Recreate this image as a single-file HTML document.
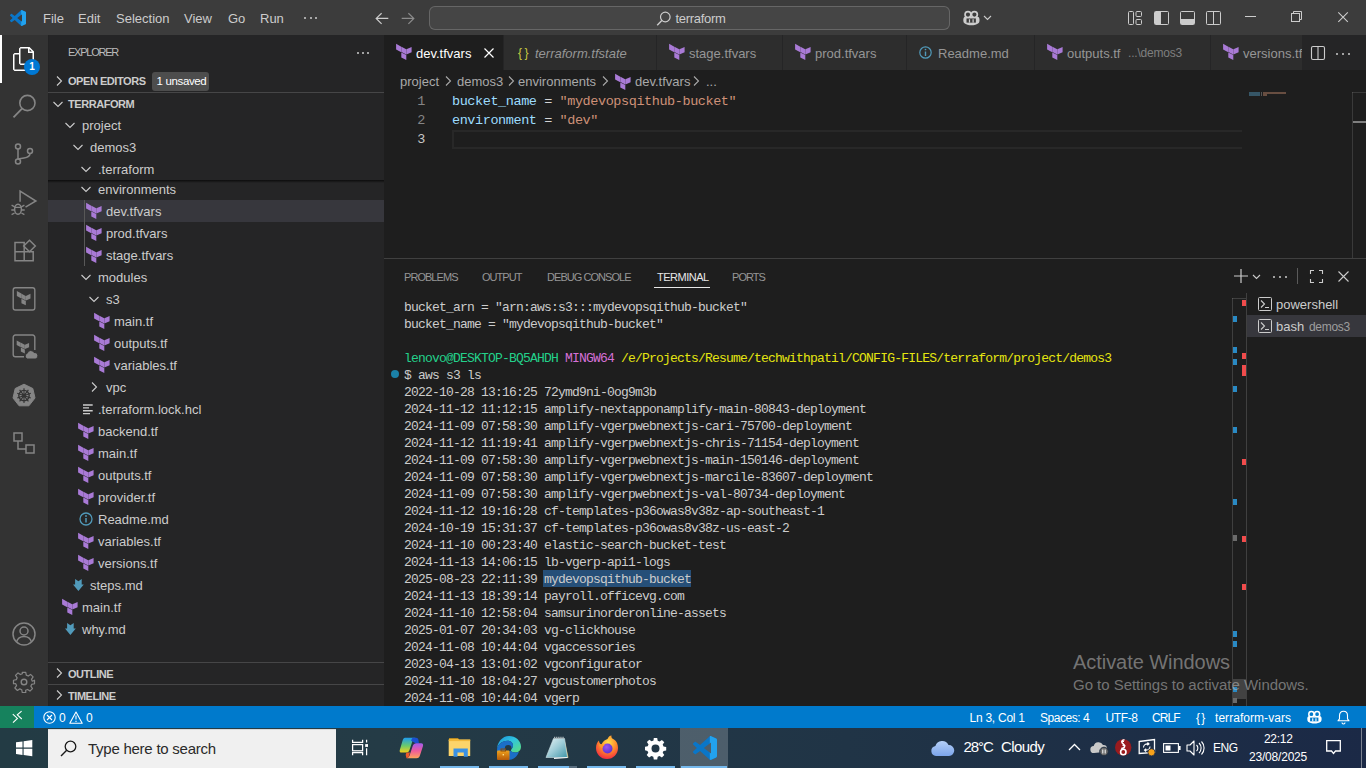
<!DOCTYPE html>
<html><head><meta charset="utf-8"><style>
*{margin:0;padding:0;box-sizing:border-box}
html,body{width:1366px;height:768px;overflow:hidden;background:#1e1e1e;font-family:"Liberation Sans",sans-serif;color:#cccccc}
.a{position:absolute}
.t{position:absolute;white-space:pre;line-height:1}
#title{left:0;top:0;width:1366px;height:35px;background:#3c3c3c}
#act{left:0;top:35px;width:48px;height:671px;background:#333333}
#side{left:48px;top:35px;width:336px;height:671px;background:#252526}
#tabs{left:384px;top:35px;width:982px;height:35px;background:#252526}
#status{left:0;top:706px;width:1366px;height:22px;background:#007acc}
#task{left:0;top:728px;width:1366px;height:40px;background:linear-gradient(90deg,#233b44 0%,#243b46 28%,#203446 62%,#1b2946 100%)}
svg.i{position:absolute;overflow:visible}
.m{font-family:"Liberation Mono",monospace}
</style></head><body>
<div id="title" class="a"></div>
<div id="act" class="a"></div>
<div id="side" class="a"></div>
<div class="a" style="left:48px;top:35px;width:1px;height:671px;background:#232324;"></div>
<div id="tabs" class="a"></div>
<div id="status" class="a"></div>
<div id="task" class="a"></div>
<svg class="i" style="left:10px;top:10px" width="16" height="16" viewBox="0 0 16 16"><defs><clipPath id="vca"><path clip-rule="evenodd" d="M70.9 99.3C72.5 99.9 74.3 99.9 75.9 99.1L96.5 89.2C98.6 88.2 100 86 100 83.6V16.4C100 14 98.6 11.8 96.5 10.8L75.9.9C73.8-.1 71.3.1 69.5 1.4 69.3 1.6 69 1.8 68.8 2.1L29.4 38 12.2 25C10.6 23.8 8.4 23.9 6.9 25.2L1.4 30.3C-.5 31.9-.5 34.8 1.4 36.4L16.2 50 1.4 63.6C-.5 65.2-.5 68.1 1.4 69.7L6.9 74.8C8.4 76.1 10.6 76.2 12.2 75L29.4 62 68.8 97.9C69.4 98.5 70.1 99 70.9 99.3ZM75 27.3 45.1 50 75 72.7Z"/></clipPath></defs><g transform="scale(0.16)"><g clip-path="url(#vca)"><rect x="0" y="0" width="100" height="100" fill="#0a76c8"/><rect x="70" y="0" width="30" height="100" fill="#22a2ee"/></g></g></svg>
<div class="t" style="left:43px;top:11.50px;font-size:13px;height:13px;line-height:13px;color:#cccccc;">File</div>
<div class="t" style="left:78px;top:11.50px;font-size:13px;height:13px;line-height:13px;color:#cccccc;">Edit</div>
<div class="t" style="left:116px;top:11.50px;font-size:13px;height:13px;line-height:13px;color:#cccccc;">Selection</div>
<div class="t" style="left:184px;top:11.50px;font-size:13px;height:13px;line-height:13px;color:#cccccc;">View</div>
<div class="t" style="left:228px;top:11.50px;font-size:13px;height:13px;line-height:13px;color:#cccccc;">Go</div>
<div class="t" style="left:260px;top:11.50px;font-size:13px;height:13px;line-height:13px;color:#cccccc;">Run</div>
<div class="a" style="left:304px;top:17px;width:2px;height:2px;background:#cccccc;border-radius:1px"></div>
<div class="a" style="left:309.5px;top:17px;width:2px;height:2px;background:#cccccc;border-radius:1px"></div>
<div class="a" style="left:315px;top:17px;width:2px;height:2px;background:#cccccc;border-radius:1px"></div>
<svg class="i" style="left:375px;top:12px" width="14" height="13" viewBox="0 0 14 13"><path d="M13.3 6.4H1.2M6.6 1.2 1.2 6.4l5.4 5.4" fill="none" stroke="#cccccc" stroke-width="1.2"/></svg>
<svg class="i" style="left:401px;top:12px" width="14" height="13" viewBox="0 0 14 13"><path d="M.7 6.4h12.1M7.4 1.2l5.4 5.2-5.4 5.4" fill="none" stroke="#8c8c8c" stroke-width="1.2"/></svg>
<div class="a" style="left:429px;top:6px;width:521px;height:24px;background:rgba(255,255,255,0.05);border:1px solid rgba(255,255,255,0.18);border-radius:6px"></div>
<svg class="i" style="left:656px;top:10.5px" width="15" height="15" viewBox="0 0 15 15"><circle cx="9.3" cy="6" r="4.8" fill="none" stroke="#cccccc" stroke-width="1.2"/><path d="M5.8 9.5 1.2 14.2" stroke="#cccccc" stroke-width="1.4"/></svg>
<div class="t" style="left:675.5px;top:12.20px;font-size:13px;height:13px;line-height:13px;color:#cccccc;letter-spacing:-0.3px">terraform</div>
<svg class="i" style="left:962.5px;top:10.5px" width="18" height="16" viewBox="0 0 18 16"><g transform="scale(1.13)"><path d="M1.2 5.2C0 6 0 9.5 1 10.6 2.6 12.2 5 12.6 7.45 12.6S12.3 12.2 13.9 10.6C14.9 9.5 14.9 6 13.7 5.2Z" fill="#cccccc"/><circle cx="4.4" cy="3.2" r="2.6" fill="#3c3c3c" stroke="#cccccc" stroke-width="1.5"/><circle cx="10.1" cy="3.2" r="2.6" fill="#3c3c3c" stroke="#cccccc" stroke-width="1.5"/><rect x="3.1" y="6.6" width="8.3" height="3.7" fill="#3c3c3c"/><rect x="5.2" y="7.3" width="1.1" height="3" fill="#cccccc"/><rect x="8.4" y="7.3" width="1.1" height="3" fill="#cccccc"/></g></svg>
<svg class="i" style="left:983px;top:15px" width="9" height="6" viewBox="0 0 9 6"><path d="M1 1l3.5 3.5L8 1" fill="none" stroke="#cccccc" stroke-width="1.1"/></svg>
<svg class="i" style="left:1128px;top:11px" width="14" height="14" viewBox="0 0 14 14"><rect x="0.5" y="0.5" width="5" height="13" rx="1" fill="none" stroke="#cccccc"/><rect x="8" y="0.5" width="5.5" height="5" rx="1" fill="none" stroke="#cccccc"/><rect x="8" y="8.5" width="5.5" height="5" rx="1" fill="none" stroke="#cccccc"/></svg>
<svg class="i" style="left:1154px;top:11px" width="15" height="14" viewBox="0 0 15 14"><rect x="0.5" y="0.5" width="14" height="13" rx="1" fill="none" stroke="#cccccc"/><rect x="1" y="1" width="6" height="12" fill="#cccccc"/></svg>
<svg class="i" style="left:1180px;top:11px" width="15" height="14" viewBox="0 0 15 14"><rect x="0.5" y="0.5" width="14" height="13" rx="1" fill="none" stroke="#cccccc"/><rect x="1" y="8" width="13" height="5" fill="#cccccc"/></svg>
<svg class="i" style="left:1206px;top:11px" width="15" height="14" viewBox="0 0 15 14"><rect x="0.5" y="0.5" width="14" height="13" rx="1" fill="none" stroke="#cccccc"/><path d="M7.5 1v12" stroke="#cccccc"/></svg>
<div class="a" style="left:1245px;top:16px;width:11px;height:1px;background:#cccccc;"></div>
<svg class="i" style="left:1291px;top:11px" width="12" height="12" viewBox="0 0 12 12"><rect x="0.5" y="2.5" width="8" height="8" fill="none" stroke="#cccccc"/><path d="M2.5 2.5V.5h8v8h-2" fill="none" stroke="#cccccc"/></svg>
<svg class="i" style="left:1338px;top:12px" width="10" height="10" viewBox="0 0 10 10"><path d="M0.3 0.3l9.5 9.5M9.8 0.3l-9.5 9.5" stroke="#cccccc" stroke-width="1.1"/></svg>
<div class="a" style="left:0px;top:35px;width:2px;height:48px;background:#ffffff;"></div>
<svg class="i" style="left:12px;top:47px" width="24" height="24" viewBox="0 0 24 24"><path d="M17.5 0H8.5L7 1.5V6H2.5L1 7.5v15.07L2.5 24h12.07L16 22.57V18h4.7l1.3-1.43V4.5L17.5 0zm0 2.12l2.38 2.38H17.5V2.12zm-3 20.38h-12v-15H7v9.07L8.5 18h6v4.5zm6-6h-12v-15H16V6h4.5v10.5z" fill="#ffffff"/></svg>
<div class="a" style="left:24px;top:59px;width:16px;height:16px;border-radius:8px;background:#0078d4;color:#fff;font-size:10px;line-height:16px;text-align:center;font-weight:bold">1</div>
<svg class="i" style="left:12px;top:93px" width="24" height="24" viewBox="0 0 24 24"><circle cx="15.4" cy="10" r="7.6" fill="none" stroke="#858585" stroke-width="1.6"/><path d="M10 15.6 1.5 24.3" stroke="#858585" stroke-width="1.8"/></svg>
<svg class="i" style="left:12px;top:142px" width="24" height="24" viewBox="0 0 24 24"><circle cx="6" cy="4.5" r="2.5" fill="none" stroke="#858585" stroke-width="1.5"/><circle cx="6" cy="19.5" r="2.5" fill="none" stroke="#858585" stroke-width="1.5"/><circle cx="18" cy="9" r="2.5" fill="none" stroke="#858585" stroke-width="1.5"/><path d="M6 7v10M18 11.5c0 3-3 4-6 4.5-3 .5-6 1-6 1" fill="none" stroke="#858585" stroke-width="1.5"/></svg>
<svg class="i" style="left:8px;top:186px" width="32" height="32" viewBox="0 0 32 32"><path d="M12.1 15.8V5.2L27.9 15 17.5 21.2" fill="none" stroke="#858585" stroke-width="1.5" stroke-linejoin="miter"/><ellipse cx="10" cy="23.3" rx="3.4" ry="5" fill="none" stroke="#858585" stroke-width="1.5"/><path d="M6.7 21.4H13.3M3.6 19.2l3 1.6M16.4 19.2l-3 1.6M3.3 24h3.3M16.7 24h-3.3M3.6 28.6l3-1.6M16.4 28.6l-3-1.6" fill="none" stroke="#858585" stroke-width="1.4"/></svg>
<svg class="i" style="left:8px;top:235px" width="32" height="32" viewBox="0 0 32 32"><path d="M7 7.6H16.2V25.8H7zM7 16.8H25.2V25.8H16.2" fill="none" stroke="#858585" stroke-width="1.5"/><path d="M21.5 5.2 27.3 11 21.5 16.8 15.7 11z" fill="none" stroke="#858585" stroke-width="1.5"/></svg>
<svg class="i" style="left:0px;top:283px" width="48" height="30" viewBox="0 0 48 30"><rect x="13.2" y="4.7" width="21.6" height="22.3" rx="2.2" fill="none" stroke="#858585" stroke-width="1.4"/><g transform="translate(15 5.6) scale(0.88)"><path fill="#858585" d="M2.1 2.8 7.3 5.7V11.3L2.1 8.5ZM7.5 5.8 12.2 8.3V13.6L7.5 11.1ZM12.4 8.3 17.6 5.9V11.3L12.4 13.6ZM7.3 11.6 12.3 14.1V19L7.3 16.6Z"/></g></svg>
<svg class="i" style="left:0px;top:331px" width="48" height="30" viewBox="0 0 48 30"><path d="M24 25.8H15.4A2.2 2.2 0 0 1 13.2 23.6V6.2A2.2 2.2 0 0 1 15.4 4H32.6A2.2 2.2 0 0 1 34.8 6.2V19" fill="none" stroke="#858585" stroke-width="1.4"/><g transform="translate(15 7.2) scale(0.8)"><path fill="#858585" d="M2.1 2.8 7.3 5.7V11.3L2.1 8.5ZM7.5 5.8 12.2 8.3V13.6L7.5 11.1ZM12.4 8.3 17.6 5.9V11.3L12.4 13.6ZM7.3 11.6 12.3 14.1V19L7.3 16.6Z"/></g><path d="M27.5 28A3 3 0 0 1 27.3 22.2 3.6 3.6 0 0 1 34 21.5 3.2 3.2 0 0 1 35.3 28Z" fill="#858585" stroke="#333333" stroke-width="1"/></svg>
<svg class="i" style="left:12px;top:383px" width="24" height="24" viewBox="0 0 24 24"><path d="M12 1.2 20.8 5.5 23 15 16.9 22.8H7.1L1 15 3.2 5.5z" fill="#858585" stroke="#858585" stroke-width="1" stroke-linejoin="round"/><circle cx="12" cy="12.6" r="5.2" fill="none" stroke="#333333" stroke-width="1.4"/><circle cx="12" cy="12.6" r="1.5" fill="#333333"/><path d="M12 5.3v14.6M5.2 10.3l13.6 4.6M5.2 14.9l13.6-4.6M7.6 6.8l8.8 11.6M16.4 6.8 7.6 18.4" stroke="#333333" stroke-width="1.1"/></svg>
<svg class="i" style="left:12px;top:431px" width="24" height="24" viewBox="0 0 24 24"><rect x="2" y="2" width="8" height="8" fill="none" stroke="#858585" stroke-width="1.5"/><rect x="14" y="14" width="8" height="8" fill="none" stroke="#858585" stroke-width="1.5"/><path d="M6 10v8h8" fill="none" stroke="#858585" stroke-width="1.5"/></svg>
<svg class="i" style="left:12px;top:622px" width="24" height="24" viewBox="0 0 24 24"><circle cx="12" cy="12" r="11" fill="none" stroke="#858585" stroke-width="1.5"/><circle cx="12" cy="9" r="4" fill="none" stroke="#858585" stroke-width="1.5"/><path d="M4.5 20c1-3.5 4-5.5 7.5-5.5s6.5 2 7.5 5.5" fill="none" stroke="#858585" stroke-width="1.5"/></svg>
<svg class="i" style="left:12px;top:670px" width="24" height="24" viewBox="0 0 24 24"><path d="M10 1h4l.6 3.2 2.2 1 2.7-1.9 2.9 2.9-1.9 2.7 1 2.2L24 10v4l-3.2.6-1 2.2 1.9 2.7-2.9 2.9-2.7-1.9-2.2 1L14 24h-4l-.6-3.2-2.2-1-2.7 1.9-2.9-2.9 1.9-2.7-1-2.2L0 14v-4l3.2-.6 1-2.2-1.9-2.7 2.9-2.9 2.7 1.9 2.2-1z" fill="none" stroke="#858585" stroke-width="1.4" stroke-linejoin="round" transform="translate(1.5 1.5) scale(0.875)"/><circle cx="12" cy="12" r="2.8" fill="none" stroke="#858585" stroke-width="1.4"/></svg>
<div class="t" style="left:68px;top:47.00px;font-size:11px;height:11px;line-height:11px;color:#bbbbbb;letter-spacing:-1.25px">EXPLORER</div>
<div class="a" style="left:357px;top:52px;width:2px;height:2px;background:#cccccc;border-radius:1px"></div>
<div class="a" style="left:362px;top:52px;width:2px;height:2px;background:#cccccc;border-radius:1px"></div>
<div class="a" style="left:367px;top:52px;width:2px;height:2px;background:#cccccc;border-radius:1px"></div>
<svg class="i" style="left:51px;top:73px" width="16" height="16" viewBox="0 0 16 16"><path d="M6 3.5 10.5 8 6 12.5" fill="none" stroke="#cccccc" stroke-width="1.1"/></svg>
<div class="t" style="left:68px;top:75.50px;font-size:11px;height:11px;line-height:11px;color:#cccccc;font-weight:bold;letter-spacing:-0.45px">OPEN EDITORS</div>
<div class="a" style="left:152px;top:72px;width:57px;height:19px;background:#4d4d4d;border-radius:3px"></div>
<div class="t" style="left:156.5px;top:76.25px;font-size:11.5px;height:11.5px;line-height:11.5px;color:#ffffff;letter-spacing:-0.35px">1 unsaved</div>
<div class="a" style="left:48px;top:92px;width:336px;height:1px;background:rgba(204,204,204,0.2);"></div>
<svg class="i" style="left:50px;top:96px" width="16" height="16" viewBox="0 0 16 16"><path d="M3.5 6 8 10.5 12.5 6" fill="none" stroke="#cccccc" stroke-width="1.1"/></svg>
<div class="t" style="left:68px;top:99.00px;font-size:11px;height:11px;line-height:11px;color:#cccccc;font-weight:bold;letter-spacing:-0.45px">TERRAFORM</div>
<div class="a" style="left:48px;top:200px;width:336px;height:22px;background:#37373d;"></div>
<div class="a" style="left:84px;top:200px;width:1px;height:66px;background:#585858;"></div>
<svg class="i" style="left:78px;top:181px" width="16" height="16" viewBox="0 0 16 16"><path d="M3.5 6 8 10.5 12.5 6" fill="none" stroke="#cccccc" stroke-width="1.1"/></svg>
<div class="t" style="left:98px;top:182.50px;font-size:13px;height:13px;line-height:13px;color:#cccccc;">environments</div>
<svg class="i" style="left:83.9px;top:200.0px" width="20" height="20" viewBox="0 0 20 20"><path fill="#a97ad6" d="M2.1 2.8 7.3 5.7V11.3L2.1 8.5ZM7.5 5.8 12.2 8.3V13.6L7.5 11.1ZM12.4 8.3 17.6 5.9V11.3L12.4 13.6ZM7.3 11.6 12.3 14.1V19L7.3 16.6Z"/></svg>
<div class="t" style="left:106px;top:204.50px;font-size:13px;height:13px;line-height:13px;color:#cccccc;">dev.tfvars</div>
<svg class="i" style="left:83.9px;top:222.0px" width="20" height="20" viewBox="0 0 20 20"><path fill="#a97ad6" d="M2.1 2.8 7.3 5.7V11.3L2.1 8.5ZM7.5 5.8 12.2 8.3V13.6L7.5 11.1ZM12.4 8.3 17.6 5.9V11.3L12.4 13.6ZM7.3 11.6 12.3 14.1V19L7.3 16.6Z"/></svg>
<div class="t" style="left:106px;top:226.50px;font-size:13px;height:13px;line-height:13px;color:#cccccc;">prod.tfvars</div>
<svg class="i" style="left:83.9px;top:244.0px" width="20" height="20" viewBox="0 0 20 20"><path fill="#a97ad6" d="M2.1 2.8 7.3 5.7V11.3L2.1 8.5ZM7.5 5.8 12.2 8.3V13.6L7.5 11.1ZM12.4 8.3 17.6 5.9V11.3L12.4 13.6ZM7.3 11.6 12.3 14.1V19L7.3 16.6Z"/></svg>
<div class="t" style="left:106px;top:248.50px;font-size:13px;height:13px;line-height:13px;color:#cccccc;">stage.tfvars</div>
<svg class="i" style="left:78px;top:269px" width="16" height="16" viewBox="0 0 16 16"><path d="M3.5 6 8 10.5 12.5 6" fill="none" stroke="#cccccc" stroke-width="1.1"/></svg>
<div class="t" style="left:98px;top:270.50px;font-size:13px;height:13px;line-height:13px;color:#cccccc;">modules</div>
<svg class="i" style="left:86px;top:291px" width="16" height="16" viewBox="0 0 16 16"><path d="M3.5 6 8 10.5 12.5 6" fill="none" stroke="#cccccc" stroke-width="1.1"/></svg>
<div class="t" style="left:106px;top:292.50px;font-size:13px;height:13px;line-height:13px;color:#cccccc;">s3</div>
<svg class="i" style="left:91.9px;top:310.0px" width="20" height="20" viewBox="0 0 20 20"><path fill="#a97ad6" d="M2.1 2.8 7.3 5.7V11.3L2.1 8.5ZM7.5 5.8 12.2 8.3V13.6L7.5 11.1ZM12.4 8.3 17.6 5.9V11.3L12.4 13.6ZM7.3 11.6 12.3 14.1V19L7.3 16.6Z"/></svg>
<div class="t" style="left:114px;top:314.50px;font-size:13px;height:13px;line-height:13px;color:#cccccc;">main.tf</div>
<svg class="i" style="left:91.9px;top:332.0px" width="20" height="20" viewBox="0 0 20 20"><path fill="#a97ad6" d="M2.1 2.8 7.3 5.7V11.3L2.1 8.5ZM7.5 5.8 12.2 8.3V13.6L7.5 11.1ZM12.4 8.3 17.6 5.9V11.3L12.4 13.6ZM7.3 11.6 12.3 14.1V19L7.3 16.6Z"/></svg>
<div class="t" style="left:114px;top:336.50px;font-size:13px;height:13px;line-height:13px;color:#cccccc;">outputs.tf</div>
<svg class="i" style="left:91.9px;top:354.0px" width="20" height="20" viewBox="0 0 20 20"><path fill="#a97ad6" d="M2.1 2.8 7.3 5.7V11.3L2.1 8.5ZM7.5 5.8 12.2 8.3V13.6L7.5 11.1ZM12.4 8.3 17.6 5.9V11.3L12.4 13.6ZM7.3 11.6 12.3 14.1V19L7.3 16.6Z"/></svg>
<div class="t" style="left:114px;top:358.50px;font-size:13px;height:13px;line-height:13px;color:#cccccc;">variables.tf</div>
<svg class="i" style="left:86px;top:379px" width="16" height="16" viewBox="0 0 16 16"><path d="M6 3.5 10.5 8 6 12.5" fill="none" stroke="#cccccc" stroke-width="1.1"/></svg>
<div class="t" style="left:106px;top:380.50px;font-size:13px;height:13px;line-height:13px;color:#cccccc;">vpc</div>
<svg class="i" style="left:83.2px;top:403.5px" width="11" height="11" viewBox="0 0 11 11"><path d="M0 1h9.7M0 3.9h6M0 6.8h9.7M0 9.6h7" stroke="#cccccc" stroke-width="1.4"/></svg>
<div class="t" style="left:98px;top:402.50px;font-size:13px;height:13px;line-height:13px;color:#cccccc;">.terraform.lock.hcl</div>
<svg class="i" style="left:75.9px;top:420.0px" width="20" height="20" viewBox="0 0 20 20"><path fill="#a97ad6" d="M2.1 2.8 7.3 5.7V11.3L2.1 8.5ZM7.5 5.8 12.2 8.3V13.6L7.5 11.1ZM12.4 8.3 17.6 5.9V11.3L12.4 13.6ZM7.3 11.6 12.3 14.1V19L7.3 16.6Z"/></svg>
<div class="t" style="left:98px;top:424.50px;font-size:13px;height:13px;line-height:13px;color:#cccccc;">backend.tf</div>
<svg class="i" style="left:75.9px;top:442.0px" width="20" height="20" viewBox="0 0 20 20"><path fill="#a97ad6" d="M2.1 2.8 7.3 5.7V11.3L2.1 8.5ZM7.5 5.8 12.2 8.3V13.6L7.5 11.1ZM12.4 8.3 17.6 5.9V11.3L12.4 13.6ZM7.3 11.6 12.3 14.1V19L7.3 16.6Z"/></svg>
<div class="t" style="left:98px;top:446.50px;font-size:13px;height:13px;line-height:13px;color:#cccccc;">main.tf</div>
<svg class="i" style="left:75.9px;top:464.0px" width="20" height="20" viewBox="0 0 20 20"><path fill="#a97ad6" d="M2.1 2.8 7.3 5.7V11.3L2.1 8.5ZM7.5 5.8 12.2 8.3V13.6L7.5 11.1ZM12.4 8.3 17.6 5.9V11.3L12.4 13.6ZM7.3 11.6 12.3 14.1V19L7.3 16.6Z"/></svg>
<div class="t" style="left:98px;top:468.50px;font-size:13px;height:13px;line-height:13px;color:#cccccc;">outputs.tf</div>
<svg class="i" style="left:75.9px;top:486.0px" width="20" height="20" viewBox="0 0 20 20"><path fill="#a97ad6" d="M2.1 2.8 7.3 5.7V11.3L2.1 8.5ZM7.5 5.8 12.2 8.3V13.6L7.5 11.1ZM12.4 8.3 17.6 5.9V11.3L12.4 13.6ZM7.3 11.6 12.3 14.1V19L7.3 16.6Z"/></svg>
<div class="t" style="left:98px;top:490.50px;font-size:13px;height:13px;line-height:13px;color:#cccccc;">provider.tf</div>
<svg class="i" style="left:79px;top:512px" width="14" height="14" viewBox="0 0 14 14"><circle cx="7" cy="7" r="6" fill="none" stroke="#519aba" stroke-width="1.3"/><path d="M7 6v4.5" stroke="#519aba" stroke-width="1.5"/><circle cx="7" cy="4" r="0.9" fill="#519aba"/></svg>
<div class="t" style="left:98px;top:512.50px;font-size:13px;height:13px;line-height:13px;color:#cccccc;">Readme.md</div>
<svg class="i" style="left:75.9px;top:530.0px" width="20" height="20" viewBox="0 0 20 20"><path fill="#a97ad6" d="M2.1 2.8 7.3 5.7V11.3L2.1 8.5ZM7.5 5.8 12.2 8.3V13.6L7.5 11.1ZM12.4 8.3 17.6 5.9V11.3L12.4 13.6ZM7.3 11.6 12.3 14.1V19L7.3 16.6Z"/></svg>
<div class="t" style="left:98px;top:534.50px;font-size:13px;height:13px;line-height:13px;color:#cccccc;">variables.tf</div>
<svg class="i" style="left:75.9px;top:552.0px" width="20" height="20" viewBox="0 0 20 20"><path fill="#a97ad6" d="M2.1 2.8 7.3 5.7V11.3L2.1 8.5ZM7.5 5.8 12.2 8.3V13.6L7.5 11.1ZM12.4 8.3 17.6 5.9V11.3L12.4 13.6ZM7.3 11.6 12.3 14.1V19L7.3 16.6Z"/></svg>
<div class="t" style="left:98px;top:556.50px;font-size:13px;height:13px;line-height:13px;color:#cccccc;">versions.tf</div>
<svg class="i" style="left:72.5px;top:579px" width="12" height="13" viewBox="0 0 12 13"><path d="M2.1 0 5.4 2.2 8.7 0V5.6H10.8L5.4 12 0 5.6H2.1Z" fill="#519aba"/></svg>
<div class="t" style="left:90px;top:578.50px;font-size:13px;height:13px;line-height:13px;color:#cccccc;">steps.md</div>
<svg class="i" style="left:59.9px;top:596.0px" width="20" height="20" viewBox="0 0 20 20"><path fill="#a97ad6" d="M2.1 2.8 7.3 5.7V11.3L2.1 8.5ZM7.5 5.8 12.2 8.3V13.6L7.5 11.1ZM12.4 8.3 17.6 5.9V11.3L12.4 13.6ZM7.3 11.6 12.3 14.1V19L7.3 16.6Z"/></svg>
<div class="t" style="left:82px;top:600.50px;font-size:13px;height:13px;line-height:13px;color:#cccccc;">main.tf</div>
<svg class="i" style="left:64.5px;top:623px" width="12" height="13" viewBox="0 0 12 13"><path d="M2.1 0 5.4 2.2 8.7 0V5.6H10.8L5.4 12 0 5.6H2.1Z" fill="#519aba"/></svg>
<div class="t" style="left:82px;top:622.50px;font-size:13px;height:13px;line-height:13px;color:#cccccc;">why.md</div>
<div class="a" style="left:48px;top:114px;width:336px;height:66px;background:#252526;"></div>
<div class="a" style="left:48px;top:180px;width:336px;height:3px;background:linear-gradient(#000000aa,#00000000)"></div>
<svg class="i" style="left:62px;top:117px" width="16" height="16" viewBox="0 0 16 16"><path d="M3.5 6 8 10.5 12.5 6" fill="none" stroke="#cccccc" stroke-width="1.1"/></svg>
<div class="t" style="left:82px;top:118.50px;font-size:13px;height:13px;line-height:13px;color:#cccccc;">project</div>
<svg class="i" style="left:70px;top:139px" width="16" height="16" viewBox="0 0 16 16"><path d="M3.5 6 8 10.5 12.5 6" fill="none" stroke="#cccccc" stroke-width="1.1"/></svg>
<div class="t" style="left:90px;top:140.50px;font-size:13px;height:13px;line-height:13px;color:#cccccc;">demos3</div>
<svg class="i" style="left:78px;top:161px" width="16" height="16" viewBox="0 0 16 16"><path d="M3.5 6 8 10.5 12.5 6" fill="none" stroke="#cccccc" stroke-width="1.1"/></svg>
<div class="t" style="left:98px;top:162.50px;font-size:13px;height:13px;line-height:13px;color:#cccccc;">.terraform</div>
<div class="a" style="left:48px;top:662px;width:336px;height:1px;background:rgba(204,204,204,0.2);"></div>
<svg class="i" style="left:51px;top:665px" width="16" height="16" viewBox="0 0 16 16"><path d="M6 3.5 10.5 8 6 12.5" fill="none" stroke="#cccccc" stroke-width="1.1"/></svg>
<div class="t" style="left:68px;top:669.00px;font-size:11px;height:11px;line-height:11px;color:#cccccc;font-weight:bold;letter-spacing:-0.45px">OUTLINE</div>
<div class="a" style="left:48px;top:684px;width:336px;height:1px;background:rgba(204,204,204,0.2);"></div>
<svg class="i" style="left:51px;top:687px" width="16" height="16" viewBox="0 0 16 16"><path d="M6 3.5 10.5 8 6 12.5" fill="none" stroke="#cccccc" stroke-width="1.1"/></svg>
<div class="t" style="left:68px;top:691.00px;font-size:11px;height:11px;line-height:11px;color:#cccccc;font-weight:bold;letter-spacing:-0.45px">TIMELINE</div>
<div class="a" style="left:384px;top:35px;width:119px;height:35px;background:#1e1e1e;"></div>
<svg class="i" style="left:393.9px;top:41.2px" width="20" height="20" viewBox="0 0 20 20"><path fill="#a97ad6" d="M2.1 2.8 7.3 5.7V11.3L2.1 8.5ZM7.5 5.8 12.2 8.3V13.6L7.5 11.1ZM12.4 8.3 17.6 5.9V11.3L12.4 13.6ZM7.3 11.6 12.3 14.1V19L7.3 16.6Z"/></svg>
<div class="t" style="left:416px;top:46.50px;font-size:13px;height:13px;line-height:13px;color:#ffffff;">dev.tfvars</div>
<div class="a" style="left:504px;top:35px;width:152px;height:35px;background:#2d2d2d;"></div>
<div class="t" style="left:518px;top:46.50px;font-size:12px;height:12px;line-height:12px;color:#cbcb41;letter-spacing:2.5px">{}</div>
<div class="t" style="left:535px;top:46.50px;font-size:13px;height:13px;line-height:13px;color:#969696;font-style:italic">terraform.tfstate</div>
<div class="a" style="left:657px;top:35px;width:125px;height:35px;background:#2d2d2d;"></div>
<svg class="i" style="left:666.9px;top:41.2px" width="20" height="20" viewBox="0 0 20 20"><path fill="#a97ad6" d="M2.1 2.8 7.3 5.7V11.3L2.1 8.5ZM7.5 5.8 12.2 8.3V13.6L7.5 11.1ZM12.4 8.3 17.6 5.9V11.3L12.4 13.6ZM7.3 11.6 12.3 14.1V19L7.3 16.6Z"/></svg>
<div class="t" style="left:689px;top:46.50px;font-size:13px;height:13px;line-height:13px;color:#969696;">stage.tfvars</div>
<div class="a" style="left:783px;top:35px;width:123px;height:35px;background:#2d2d2d;"></div>
<svg class="i" style="left:792.9px;top:41.2px" width="20" height="20" viewBox="0 0 20 20"><path fill="#a97ad6" d="M2.1 2.8 7.3 5.7V11.3L2.1 8.5ZM7.5 5.8 12.2 8.3V13.6L7.5 11.1ZM12.4 8.3 17.6 5.9V11.3L12.4 13.6ZM7.3 11.6 12.3 14.1V19L7.3 16.6Z"/></svg>
<div class="t" style="left:815px;top:46.50px;font-size:13px;height:13px;line-height:13px;color:#969696;">prod.tfvars</div>
<div class="a" style="left:907px;top:35px;width:127px;height:35px;background:#2d2d2d;"></div>
<svg class="i" style="left:919px;top:46px" width="13" height="13" viewBox="0 0 13 13"><circle cx="6.5" cy="6.5" r="5.7" fill="none" stroke="#519aba" stroke-width="1.2"/><path d="M6.5 5.5v4.5" stroke="#519aba" stroke-width="1.4"/><circle cx="6.5" cy="3.5" r="0.85" fill="#519aba"/></svg>
<div class="t" style="left:938px;top:46.50px;font-size:13px;height:13px;line-height:13px;color:#969696;">Readme.md</div>
<div class="a" style="left:1035px;top:35px;width:175px;height:35px;background:#2d2d2d;"></div>
<svg class="i" style="left:1044.9px;top:41.2px" width="20" height="20" viewBox="0 0 20 20"><path fill="#a97ad6" d="M2.1 2.8 7.3 5.7V11.3L2.1 8.5ZM7.5 5.8 12.2 8.3V13.6L7.5 11.1ZM12.4 8.3 17.6 5.9V11.3L12.4 13.6ZM7.3 11.6 12.3 14.1V19L7.3 16.6Z"/></svg>
<div class="t" style="left:1067px;top:46.50px;font-size:13px;height:13px;line-height:13px;color:#969696;">outputs.tf</div>
<div class="a" style="left:1211px;top:35px;width:91px;height:35px;background:#2d2d2d;"></div>
<svg class="i" style="left:1220.9px;top:41.2px" width="20" height="20" viewBox="0 0 20 20"><path fill="#a97ad6" d="M2.1 2.8 7.3 5.7V11.3L2.1 8.5ZM7.5 5.8 12.2 8.3V13.6L7.5 11.1ZM12.4 8.3 17.6 5.9V11.3L12.4 13.6ZM7.3 11.6 12.3 14.1V19L7.3 16.6Z"/></svg>
<div class="t" style="left:1243px;top:46.50px;font-size:13px;height:13px;line-height:13px;color:#969696;">versions.tf</div>
<div class="a" style="left:1302px;top:35px;width:64px;height:35px;background:#252526;"></div>
<div class="t" style="left:1128px;top:47.00px;font-size:12px;height:12px;line-height:12px;color:#7f7f7f;letter-spacing:-0.2px">...\demos3</div>
<svg class="i" style="left:484px;top:48px" width="10" height="10" viewBox="0 0 10 10"><path d="M0.5 0.5l9 9M9.5 0.5l-9 9" stroke="#ffffff" stroke-width="1.2"/></svg>
<svg class="i" style="left:1311px;top:46px" width="14" height="14" viewBox="0 0 14 14"><rect x="0.5" y="0.5" width="13" height="13" rx="1.5" fill="none" stroke="#cccccc" stroke-width="1.1"/><path d="M7 1v12" stroke="#cccccc" stroke-width="1.1"/></svg>
<div class="a" style="left:1336px;top:53px;width:2px;height:2px;background:#cccccc;border-radius:1px"></div>
<div class="a" style="left:1342px;top:53px;width:2px;height:2px;background:#cccccc;border-radius:1px"></div>
<div class="a" style="left:1348px;top:53px;width:2px;height:2px;background:#cccccc;border-radius:1px"></div>
<div class="t" style="left:400px;top:74.50px;font-size:13px;height:13px;line-height:13px;color:#a9a9a9;">project</div>
<svg class="i" style="left:440px;top:73px" width="16" height="16" viewBox="0 0 16 16"><path d="M6 3.5 10.5 8 6 12.5" fill="none" stroke="#a9a9a9" stroke-width="1.1"/></svg>
<div class="t" style="left:457px;top:74.50px;font-size:13px;height:13px;line-height:13px;color:#a9a9a9;">demos3</div>
<svg class="i" style="left:503px;top:73px" width="16" height="16" viewBox="0 0 16 16"><path d="M6 3.5 10.5 8 6 12.5" fill="none" stroke="#a9a9a9" stroke-width="1.1"/></svg>
<div class="t" style="left:518px;top:74.50px;font-size:13px;height:13px;line-height:13px;color:#a9a9a9;">environments</div>
<svg class="i" style="left:596.5px;top:73px" width="16" height="16" viewBox="0 0 16 16"><path d="M6 3.5 10.5 8 6 12.5" fill="none" stroke="#a9a9a9" stroke-width="1.1"/></svg>
<svg class="i" style="left:612.9px;top:71.2px" width="20" height="20" viewBox="0 0 20 20"><path fill="#a97ad6" d="M2.1 2.8 7.3 5.7V11.3L2.1 8.5ZM7.5 5.8 12.2 8.3V13.6L7.5 11.1ZM12.4 8.3 17.6 5.9V11.3L12.4 13.6ZM7.3 11.6 12.3 14.1V19L7.3 16.6Z"/></svg>
<div class="t" style="left:635px;top:74.50px;font-size:13px;height:13px;line-height:13px;color:#a9a9a9;">dev.tfvars</div>
<svg class="i" style="left:688px;top:73px" width="16" height="16" viewBox="0 0 16 16"><path d="M6 3.5 10.5 8 6 12.5" fill="none" stroke="#a9a9a9" stroke-width="1.1"/></svg>
<div class="t" style="left:706px;top:74.50px;font-size:13px;height:13px;line-height:13px;color:#a9a9a9;">...</div>
<div class="t" style="left:0px;width:425px;text-align:right;top:95.3px;font-size:13.5px;line-height:14px;color:#858585;font-family:'Liberation Mono',monospace;letter-spacing:-0.42px">1</div>
<div class="t" style="left:0px;width:425px;text-align:right;top:114.3px;font-size:13.5px;line-height:14px;color:#858585;font-family:'Liberation Mono',monospace;letter-spacing:-0.42px">2</div>
<div class="t" style="left:0px;width:425px;text-align:right;top:133.3px;font-size:13.5px;line-height:14px;color:#c6c6c6;font-family:'Liberation Mono',monospace;letter-spacing:-0.42px">3</div>
<div class="t" style="left:452px;top:95.3px;font-size:13.5px;line-height:14px;font-family:'Liberation Mono',monospace;letter-spacing:-0.42px"><span style="color:#9cdcfe">bucket_name</span> <span style="color:#d4d4d4">=</span> <span style="color:#ce9178">"mydevopsqithub-bucket"</span></div>
<div class="t" style="left:452px;top:114.3px;font-size:13.5px;line-height:14px;font-family:'Liberation Mono',monospace;letter-spacing:-0.42px"><span style="color:#9cdcfe">environment</span> <span style="color:#d4d4d4">=</span> <span style="color:#ce9178">"dev"</span></div>
<div class="a" style="left:452px;top:130px;width:790px;height:19px;border:2px solid #282828;border-right:none"></div>
<div class="a" style="left:1249px;top:92px;width:11px;height:4px;background:#3f6a80;opacity:.75"></div>
<div class="a" style="left:1261px;top:92px;width:1px;height:4px;background:#555555;"></div>
<div class="a" style="left:1263px;top:92px;width:23px;height:1.5px;background:#7a5a4a;opacity:.8"></div>
<div class="a" style="left:1263px;top:94px;width:4px;height:1.5px;background:#7a5a4a;opacity:.8"></div>
<div class="a" style="left:1352px;top:92px;width:1px;height:166px;background:rgba(127,127,127,0.3);"></div>
<div class="a" style="left:1352px;top:92px;width:14px;height:1px;background:rgba(127,127,127,0.3);"></div>
<div class="a" style="left:1353px;top:121px;width:13px;height:2px;background:#a0a0a0;opacity:.75"></div>
<div class="a" style="left:384px;top:258px;width:982px;height:1px;background:rgba(128,128,128,0.35);"></div>
<div class="t" style="left:404px;top:271.50px;font-size:11px;height:11px;line-height:11px;color:#969696;letter-spacing:-0.95px">PROBLEMS</div>
<div class="t" style="left:482px;top:271.50px;font-size:11px;height:11px;line-height:11px;color:#969696;letter-spacing:-0.95px">OUTPUT</div>
<div class="t" style="left:547px;top:271.50px;font-size:11px;height:11px;line-height:11px;color:#969696;letter-spacing:-0.95px">DEBUG CONSOLE</div>
<div class="t" style="left:657px;top:271.50px;font-size:11px;height:11px;line-height:11px;color:#e7e7e7;letter-spacing:-0.5px">TERMINAL</div>
<div class="t" style="left:732px;top:271.50px;font-size:11px;height:11px;line-height:11px;color:#969696;letter-spacing:-0.95px">PORTS</div>
<div class="a" style="left:654px;top:287px;width:56px;height:1px;background:#e7e7e7;"></div>
<svg class="i" style="left:1234px;top:269px" width="14" height="14" viewBox="0 0 14 14"><path d="M7 0v14M0 7h14" stroke="#cccccc" stroke-width="1.2"/></svg>
<svg class="i" style="left:1252px;top:274px" width="9" height="6" viewBox="0 0 9 6"><path d="M1 1l3.5 3.5L8 1" fill="none" stroke="#cccccc" stroke-width="1.1"/></svg>
<div class="a" style="left:1273px;top:276px;width:2px;height:2px;background:#cccccc;border-radius:1px"></div>
<div class="a" style="left:1279px;top:276px;width:2px;height:2px;background:#cccccc;border-radius:1px"></div>
<div class="a" style="left:1285px;top:276px;width:2px;height:2px;background:#cccccc;border-radius:1px"></div>
<div class="a" style="left:1297px;top:268px;width:1px;height:16px;background:#5a5a5a;"></div>
<svg class="i" style="left:1310px;top:270px" width="13" height="13" viewBox="0 0 13 13"><path d="M0.5 4V0.5H4M9 0.5h3.5V4M12.5 9v3.5H9M4 12.5H0.5V9" fill="none" stroke="#cccccc" stroke-width="1.1"/></svg>
<svg class="i" style="left:1338px;top:271px" width="11" height="11" viewBox="0 0 11 11"><path d="M0.5 0.5l10 10M10.5 0.5l-10 10" stroke="#cccccc" stroke-width="1.1"/></svg>
<div class="a" style="left:543px;top:570px;width:148px;height:17px;background:#264f78;"></div>
<div class="t" style="left:404px;top:300.8px;font-size:13px;line-height:14px;color:#cccccc;font-family:'Liberation Mono',monospace;letter-spacing:-0.8px">bucket_arn = "arn:aws:s3:::mydevopsqithub-bucket"</div>
<div class="t" style="left:404px;top:317.8px;font-size:13px;line-height:14px;color:#cccccc;font-family:'Liberation Mono',monospace;letter-spacing:-0.8px">bucket_name = "mydevopsqithub-bucket"</div>
<div class="t" style="left:404px;top:351.8px;font-size:13px;line-height:14px;color:#cccccc;font-family:'Liberation Mono',monospace;letter-spacing:-0.8px"><span style="color:#23d18b">lenovo@DESKTOP-BQ5AHDH</span> <span style="color:#d670d6">MINGW64</span> <span style="color:#e5e510">/e/Projects/Resume/techwithpatil/CONFIG-FILES/terraform/project/demos3</span></div>
<div class="t" style="left:404px;top:368.8px;font-size:13px;line-height:14px;color:#cccccc;font-family:'Liberation Mono',monospace;letter-spacing:-0.8px">$ aws s3 ls</div>
<div class="t" style="left:404px;top:385.8px;font-size:13px;line-height:14px;color:#cccccc;font-family:'Liberation Mono',monospace;letter-spacing:-0.8px">2022-10-28 13:16:25 72ymd9ni-0og9m3b</div>
<div class="t" style="left:404px;top:402.8px;font-size:13px;line-height:14px;color:#cccccc;font-family:'Liberation Mono',monospace;letter-spacing:-0.8px">2024-11-12 11:12:15 amplify-nextapponamplify-main-80843-deployment</div>
<div class="t" style="left:404px;top:419.8px;font-size:13px;line-height:14px;color:#cccccc;font-family:'Liberation Mono',monospace;letter-spacing:-0.8px">2024-11-09 07:58:30 amplify-vgerpwebnextjs-cari-75700-deployment</div>
<div class="t" style="left:404px;top:436.8px;font-size:13px;line-height:14px;color:#cccccc;font-family:'Liberation Mono',monospace;letter-spacing:-0.8px">2024-11-12 11:19:41 amplify-vgerpwebnextjs-chris-71154-deployment</div>
<div class="t" style="left:404px;top:453.8px;font-size:13px;line-height:14px;color:#cccccc;font-family:'Liberation Mono',monospace;letter-spacing:-0.8px">2024-11-09 07:58:30 amplify-vgerpwebnextjs-main-150146-deployment</div>
<div class="t" style="left:404px;top:470.8px;font-size:13px;line-height:14px;color:#cccccc;font-family:'Liberation Mono',monospace;letter-spacing:-0.8px">2024-11-09 07:58:30 amplify-vgerpwebnextjs-marcile-83607-deployment</div>
<div class="t" style="left:404px;top:487.8px;font-size:13px;line-height:14px;color:#cccccc;font-family:'Liberation Mono',monospace;letter-spacing:-0.8px">2024-11-09 07:58:30 amplify-vgerpwebnextjs-val-80734-deployment</div>
<div class="t" style="left:404px;top:504.8px;font-size:13px;line-height:14px;color:#cccccc;font-family:'Liberation Mono',monospace;letter-spacing:-0.8px">2024-11-12 19:16:28 cf-templates-p36owas8v38z-ap-southeast-1</div>
<div class="t" style="left:404px;top:521.8px;font-size:13px;line-height:14px;color:#cccccc;font-family:'Liberation Mono',monospace;letter-spacing:-0.8px">2024-10-19 15:31:37 cf-templates-p36owas8v38z-us-east-2</div>
<div class="t" style="left:404px;top:538.8px;font-size:13px;line-height:14px;color:#cccccc;font-family:'Liberation Mono',monospace;letter-spacing:-0.8px">2024-11-10 00:23:40 elastic-search-bucket-test</div>
<div class="t" style="left:404px;top:555.8px;font-size:13px;line-height:14px;color:#cccccc;font-family:'Liberation Mono',monospace;letter-spacing:-0.8px">2024-11-13 14:06:15 lb-vgerp-api1-logs</div>
<div class="t" style="left:404px;top:572.8px;font-size:13px;line-height:14px;color:#cccccc;font-family:'Liberation Mono',monospace;letter-spacing:-0.8px">2025-08-23 22:11:39 mydevopsqithub-bucket</div>
<div class="t" style="left:404px;top:589.8px;font-size:13px;line-height:14px;color:#cccccc;font-family:'Liberation Mono',monospace;letter-spacing:-0.8px">2024-11-13 18:39:14 payroll.officevg.com</div>
<div class="t" style="left:404px;top:606.8px;font-size:13px;line-height:14px;color:#cccccc;font-family:'Liberation Mono',monospace;letter-spacing:-0.8px">2024-11-10 12:58:04 samsurinorderonline-assets</div>
<div class="t" style="left:404px;top:623.8px;font-size:13px;line-height:14px;color:#cccccc;font-family:'Liberation Mono',monospace;letter-spacing:-0.8px">2025-01-07 20:34:03 vg-clickhouse</div>
<div class="t" style="left:404px;top:640.8px;font-size:13px;line-height:14px;color:#cccccc;font-family:'Liberation Mono',monospace;letter-spacing:-0.8px">2024-11-08 10:44:04 vgaccessories</div>
<div class="t" style="left:404px;top:657.8px;font-size:13px;line-height:14px;color:#cccccc;font-family:'Liberation Mono',monospace;letter-spacing:-0.8px">2023-04-13 13:01:02 vgconfigurator</div>
<div class="t" style="left:404px;top:674.8px;font-size:13px;line-height:14px;color:#cccccc;font-family:'Liberation Mono',monospace;letter-spacing:-0.8px">2024-11-10 18:04:27 vgcustomerphotos</div>
<div class="t" style="left:404px;top:691.8px;font-size:13px;line-height:14px;color:#cccccc;font-family:'Liberation Mono',monospace;letter-spacing:-0.8px">2024-11-08 10:44:04 vgerp</div>
<div class="a" style="left:391px;top:370px;width:8px;height:8px;border-radius:4px;background:#1b81a8"></div>
<div class="a" style="left:1232px;top:298px;width:1px;height:408px;background:rgba(127,127,127,0.35);"></div>
<div class="a" style="left:1232px;top:298px;width:14px;height:1px;background:rgba(127,127,127,0.35);"></div>
<div class="a" style="left:1246px;top:293px;width:1px;height:413px;background:rgba(128,128,128,0.35);"></div>
<div class="a" style="left:1233px;top:316px;width:4px;height:6px;background:#2a8ac4;"></div>
<div class="a" style="left:1233px;top:347px;width:4px;height:6px;background:#2a8ac4;"></div>
<div class="a" style="left:1233px;top:359px;width:4px;height:6px;background:#2a8ac4;"></div>
<div class="a" style="left:1233px;top:386px;width:4px;height:6px;background:#2a8ac4;"></div>
<div class="a" style="left:1233px;top:427px;width:4px;height:6px;background:#2a8ac4;"></div>
<div class="a" style="left:1233px;top:499px;width:4px;height:6px;background:#2a8ac4;"></div>
<div class="a" style="left:1233px;top:631px;width:4px;height:6px;background:#2a8ac4;"></div>
<div class="a" style="left:1233px;top:641px;width:4px;height:6px;background:#2a8ac4;"></div>
<div class="a" style="left:1242px;top:300px;width:4px;height:6px;background:#f14c4c;"></div>
<div class="a" style="left:1242px;top:353px;width:4px;height:6px;background:#f14c4c;"></div>
<div class="a" style="left:1242px;top:459px;width:4px;height:6px;background:#f14c4c;"></div>
<div class="a" style="left:1242px;top:536px;width:4px;height:6px;background:#f14c4c;"></div>
<div class="a" style="left:1242px;top:584px;width:4px;height:6px;background:#f14c4c;"></div>
<div class="a" style="left:1242px;top:365px;width:4px;height:11px;background:#f14c4c;"></div>
<div class="a" style="left:1233px;top:535px;width:4px;height:6px;background:#6b6b6b;"></div>
<div class="a" style="left:1233px;top:679px;width:13px;height:20px;background:rgba(121,121,121,0.4);"></div>
<div class="a" style="left:1233px;top:687px;width:4px;height:5px;background:#2a8ac4;"></div>
<div class="a" style="left:1233px;top:698px;width:4px;height:5px;background:#6b6b6b;"></div>
<div class="a" style="left:1247px;top:315px;width:119px;height:22px;background:#37373d;"></div>
<svg class="i" style="left:1258px;top:297px" width="14" height="14" viewBox="0 0 14 14"><rect x="0.5" y="0.5" width="13" height="13" rx="1" fill="none" stroke="#cccccc" stroke-width="1"/><path d="M3 3.5 6.5 7 3 10.5M7 10.5h4" fill="none" stroke="#cccccc" stroke-width="1.1"/></svg>
<div class="t" style="left:1276px;top:297.50px;font-size:13px;height:13px;line-height:13px;color:#cccccc;">powershell</div>
<svg class="i" style="left:1258px;top:319px" width="14" height="14" viewBox="0 0 14 14"><rect x="0.5" y="0.5" width="13" height="13" rx="1" fill="none" stroke="#cccccc" stroke-width="1"/><path d="M3 3.5 6.5 7 3 10.5M7 10.5h4" fill="none" stroke="#cccccc" stroke-width="1.1"/></svg>
<div class="t" style="left:1276px;top:319.50px;font-size:13px;height:13px;line-height:13px;color:#cccccc;">bash</div>
<div class="t" style="left:1309px;top:320.50px;font-size:12px;height:12px;line-height:12px;color:#9d9d9d;letter-spacing:-0.3px">demos3</div>
<div class="t" style="left:1073px;top:652.00px;font-size:20px;height:20px;line-height:20px;color:rgba(190,190,190,0.55);letter-spacing:-0.05px">Activate Windows</div>
<div class="t" style="left:1073px;top:677.00px;font-size:15px;height:15px;line-height:15px;color:rgba(190,190,190,0.55);letter-spacing:-0.03px">Go to Settings to activate Windows.</div>
<div class="a" style="left:0px;top:706px;width:34px;height:22px;background:#16825d;"></div>
<svg class="i" style="left:0px;top:704px" width="34" height="22" viewBox="0 0 34 22"><path d="M12.8 10.2 17.4 14.4 13 18.7M21.6 7.2 17.3 10.8 21.8 15" fill="none" stroke="#ffffff" stroke-width="1.1"/></svg>
<svg class="i" style="left:43px;top:711px" width="13" height="13" viewBox="0 0 13 13"><circle cx="6.5" cy="6.5" r="5.7" fill="none" stroke="#ffffff" stroke-width="1.1"/><path d="M4 4l5 5M9 4 4 9" stroke="#ffffff" stroke-width="1.1"/></svg>
<div class="t" style="left:59px;top:712.00px;font-size:12px;height:12px;line-height:12px;color:#ffffff;">0</div>
<svg class="i" style="left:69px;top:711px" width="14" height="13" viewBox="0 0 14 13"><path d="M7 1 13.2 12.2H.8z" fill="none" stroke="#ffffff" stroke-width="1.1" stroke-linejoin="round"/><path d="M7 4.5v4M7 9.7v1.3" stroke="#ffffff" stroke-width="1.1"/></svg>
<div class="t" style="left:86px;top:712.00px;font-size:12px;height:12px;line-height:12px;color:#ffffff;">0</div>
<div class="t" style="left:969.5px;top:712.00px;font-size:12px;height:12px;line-height:12px;color:#ffffff;letter-spacing:-0.25px">Ln 3, Col 1</div>
<div class="t" style="left:1040px;top:712.00px;font-size:12px;height:12px;line-height:12px;color:#ffffff;letter-spacing:-0.45px">Spaces: 4</div>
<div class="t" style="left:1105.5px;top:712.00px;font-size:12px;height:12px;line-height:12px;color:#ffffff;letter-spacing:-0.4px">UTF-8</div>
<div class="t" style="left:1152px;top:712.00px;font-size:12px;height:12px;line-height:12px;color:#ffffff;letter-spacing:-0.9px">CRLF</div>
<div class="t" style="left:1215px;top:712.00px;font-size:12px;height:12px;line-height:12px;color:#ffffff;letter-spacing:0.05px">terraform-vars</div>
<div class="t" style="left:1196px;top:711.50px;font-size:12px;height:12px;line-height:12px;color:#ffffff;letter-spacing:-1px">{ }</div>
<svg class="i" style="left:1306.9px;top:710.6px" width="18" height="16" viewBox="0 0 18 16"><g transform="scale(1.0)"><path d="M1.2 5.2C0 6 0 9.5 1 10.6 2.6 12.2 5 12.6 7.45 12.6S12.3 12.2 13.9 10.6C14.9 9.5 14.9 6 13.7 5.2Z" fill="#ffffff"/><circle cx="4.4" cy="3.2" r="2.6" fill="#007acc" stroke="#ffffff" stroke-width="1.5"/><circle cx="10.1" cy="3.2" r="2.6" fill="#007acc" stroke="#ffffff" stroke-width="1.5"/><rect x="3.1" y="6.6" width="8.3" height="3.7" fill="#007acc"/><rect x="5.2" y="7.3" width="1.1" height="3" fill="#ffffff"/><rect x="8.4" y="7.3" width="1.1" height="3" fill="#ffffff"/></g></svg>
<svg class="i" style="left:1337px;top:710px" width="13" height="14" viewBox="0 0 13 14"><path d="M6.5 1.2c2.4 0 4 1.8 4 4.3v3.3l1.5 2H1l1.5-2V5.5c0-2.5 1.6-4.3 4-4.3z" fill="none" stroke="#ffffff" stroke-width="1.1" stroke-linejoin="round"/><path d="M5 12.5a1.5 1.5 0 0 0 3 0" fill="none" stroke="#ffffff" stroke-width="1.1"/></svg>
<svg class="i" style="left:15.8px;top:739.8px" width="16.3" height="16.3" viewBox="0 0 16.3 16.3"><path fill="#ffffff" d="M0 2.3 6.5 1.4V7.6H0ZM7.6 1.2 16.3 0V7.6H7.6ZM0 8.7H6.5V14.9L0 14ZM7.6 8.7H16.3V16.3L7.6 15.1Z"/></svg>
<div class="a" style="left:48px;top:729px;width:288px;height:39px;background:#f0f0f0;border-top:1px solid #d9d9d9"></div>
<svg class="i" style="left:60px;top:740px" width="17" height="17" viewBox="0 0 17 17"><circle cx="10.5" cy="6.5" r="5.3" fill="none" stroke="#1a1a1a" stroke-width="1.3"/><path d="M6.7 10.3 1 16" stroke="#1a1a1a" stroke-width="1.4"/></svg>
<div class="t" style="left:88px;top:740.80px;font-size:15px;height:15px;line-height:15px;color:#2a2a2a;letter-spacing:-0.25px">Type here to search</div>
<svg class="i" style="left:346px;top:734px" width="30" height="28" viewBox="0 0 30 28"><path d="M6.6 5.8V8.3H16.6V5.8M6.6 21.2V18.7H16.6V21.2M20.6 5.8V8.6M20.6 14.2V21.2" fill="none" stroke="#ffffff" stroke-width="1.25"/><rect x="6.6" y="10.6" width="10" height="6.2" fill="none" stroke="#ffffff" stroke-width="1.25"/><rect x="19.2" y="10.1" width="2.8" height="2.8" fill="#ffffff"/></svg>
<svg class="i" style="left:398px;top:736px" width="26" height="24" viewBox="0 0 26 24"><defs><linearGradient id="cpl" x1="0" y1="0" x2="0" y2="1"><stop offset="0" stop-color="#1d9cf0"/><stop offset=".55" stop-color="#6ccb6a"/><stop offset="1" stop-color="#f6d21a"/></linearGradient><linearGradient id="cpr" x1="0" y1="0" x2="0" y2="1"><stop offset="0" stop-color="#a05cf0"/><stop offset=".5" stop-color="#ef5a9c"/><stop offset="1" stop-color="#ffa45a"/></linearGradient></defs><path d="M7 1.7H17.5C16 2.3 14.8 3.8 14.3 5.5L11.3 14.5C10.7 16.2 9.2 16.6 7.5 16.6H3.6C2 16.6 1.3 15.4 1.8 13.9L4.6 4.6C5.1 2.9 5.9 1.7 7 1.7Z" fill="url(#cpl)"/><path d="M13 4.5 14.5 1.7H18C19.5 1.7 20 2.5 20.3 3.5L21 7.2H17.5Z" fill="#1a4fd0"/><path d="M20.5 7.2H23.2C24.8 7.2 25.4 8.5 25 10L22 19.3C21.5 21 20.5 22.3 18.5 22.3H8.5C10.2 21.8 11.3 20.5 11.8 18.8L14.8 9.8C15.4 8.2 16.5 7.2 18.5 7.2Z" fill="url(#cpr)"/><path d="M8.5 22.3 7.8 19.5C7.5 18.3 8.2 16.6 9.5 16.6H12L10.5 21.2Z" fill="#f05a2a"/></svg>
<svg class="i" style="left:448px;top:738px" width="23" height="19" viewBox="0 0 23 19"><path d="M1 .3H10.2L11.2 2.3H1Z" fill="#e9a518"/><rect x="0.7" y="1.6" width="21.5" height="16.4" fill="#fcd46a"/><rect x="0.7" y="1.6" width="21.5" height="1.5" fill="#f2b83a"/><path d="M5.5 10.6H19.8V18.7H15.8V14.6H9.5V18.7H5.5Z" fill="#3a91e4"/></svg>
<svg class="i" style="left:496px;top:735px" width="26" height="26" viewBox="0 0 26 26"><defs><linearGradient id="eg1" x1="0" y1="0" x2="1" y2="1"><stop offset="0" stop-color="#1a8fd8"/><stop offset=".45" stop-color="#2fc3e0"/><stop offset="1" stop-color="#5ee07a"/></linearGradient><linearGradient id="eg2" x1="0" y1="0" x2="0" y2="1"><stop offset="0" stop-color="#f0a21c"/><stop offset="1" stop-color="#b65a08"/></linearGradient></defs><path d="M13 1C19.5 1 25 5.8 25 11.5 25 15.5 22.3 17.5 19 17.5 16.5 17.5 14.5 16.4 14 14.8 16 14 17 12.3 17 10.5 17 7.5 14.3 5.8 11.5 5.8 6 5.8 1 10 1 15 1 7.3 6.3 1 13 1Z" fill="url(#eg1)"/><path d="M1 15C1 10 6 5.8 11.5 5.8 14.3 5.8 17 7.5 17 10.5 17 12.3 16 14 14 14.8 14.5 16.4 16.5 17.5 19 17.5 20.5 17.5 22 17.2 23 16.5 21.5 21.5 17 25 12 25 5.5 25 1 20.5 1 15Z" fill="#1b6fc8"/><circle cx="12.2" cy="13.2" r="3.3" fill="#223a48"/><rect x="1" y="15.5" width="12.5" height="9.5" rx="1" fill="url(#eg2)"/><rect x="5" y="14" width="4.5" height="2" fill="none" stroke="#8a4a08" stroke-width="1"/><rect x="6.6" y="19" width="1.4" height="1.4" fill="#ffe28a"/></svg>
<svg class="i" style="left:545px;top:736px" width="25" height="24" viewBox="0 0 25 24"><defs><linearGradient id="np" x1="0" y1="0" x2="1" y2="1"><stop offset="0" stop-color="#e8f4f6"/><stop offset=".5" stop-color="#9ccbd6"/><stop offset="1" stop-color="#3f95a8"/></linearGradient></defs><path d="M19.5 3.5 23.5 21.5 21.5 22Z" fill="#c9a24a"/><path d="M8.5 2.5H19.5L22.5 21.5H1Z" fill="url(#np)" stroke="#cfe3e8" stroke-width=".6"/><path d="M9 1.8H19.5" stroke="#a8b4b8" stroke-width="2.2" stroke-dasharray="1.3 .8"/><path d="M9 22.3 22.5 21.5" stroke="#f2f7f8" stroke-width="1.2"/></svg>
<svg class="i" style="left:595px;top:735px" width="24" height="25" viewBox="0 0 24 25"><defs><radialGradient id="ff" cx=".55" cy=".3" r=".85"><stop offset="0" stop-color="#ffe14a"/><stop offset=".45" stop-color="#ff8a2a"/><stop offset=".8" stop-color="#f5343f"/><stop offset="1" stop-color="#e2206e"/></radialGradient><radialGradient id="ffp" cx=".4" cy=".35" r=".7"><stop offset="0" stop-color="#9a58f0"/><stop offset="1" stop-color="#5b2ed0"/></radialGradient></defs><path d="M12 24C5.5 24 1 19 1 13 1 9.5 2.3 7 4 5.5 4 7.5 5 9 6.5 9.5 7.5 6.5 10.5 4.5 12.5 4 13.5 1.5 15 .5 16.5 .5 16 2.5 17 3.5 19 4.5 21.8 6.3 23 9.5 23 13 23 19 18.5 24 12 24Z" fill="url(#ff)"/><circle cx="12.5" cy="13.5" r="5" fill="url(#ffp)"/><path d="M4 10C5.5 9 8 9 9.5 10.5 8 10.8 7.2 12 7.5 13.5 6 12.8 4.5 11.5 4 10Z" fill="#ff9a2a"/></svg>
<svg class="i" style="left:645px;top:738px" width="21" height="21" viewBox="0 0 21 21"><path fill="#ffffff" fill-rule="evenodd" d="M8.8 0h3.4l.5 2.7 1.9.8 2.3-1.6 2.4 2.4-1.6 2.3.8 1.9 2.7.5v3.4l-2.7.5-.8 1.9 1.6 2.3-2.4 2.4-2.3-1.6-1.9.8-.5 2.7H8.8l-.5-2.7-1.9-.8-2.3 1.6-2.4-2.4 1.6-2.3-.8-1.9L0 12.2V8.8l2.7-.5.8-1.9-1.6-2.3 2.4-2.4 2.3 1.6 1.9-.8zM10.5 6.5a4 4 0 1 0 0 8 4 4 0 0 0 0-8z"/></svg>
<div class="a" style="left:680px;top:728px;width:48px;height:40px;background:rgba(255,255,255,0.2);"></div>
<svg class="i" style="left:693px;top:736px" width="24" height="24" viewBox="0 0 24 24"><defs><clipPath id="vcb"><path clip-rule="evenodd" d="M70.9 99.3C72.5 99.9 74.3 99.9 75.9 99.1L96.5 89.2C98.6 88.2 100 86 100 83.6V16.4C100 14 98.6 11.8 96.5 10.8L75.9.9C73.8-.1 71.3.1 69.5 1.4 69.3 1.6 69 1.8 68.8 2.1L29.4 38 12.2 25C10.6 23.8 8.4 23.9 6.9 25.2L1.4 30.3C-.5 31.9-.5 34.8 1.4 36.4L16.2 50 1.4 63.6C-.5 65.2-.5 68.1 1.4 69.7L6.9 74.8C8.4 76.1 10.6 76.2 12.2 75L29.4 62 68.8 97.9C69.4 98.5 70.1 99 70.9 99.3ZM75 27.3 45.1 50 75 72.7Z"/></clipPath></defs><g transform="scale(0.24)"><g clip-path="url(#vcb)"><rect x="0" y="0" width="100" height="100" fill="#0a76c8"/><rect x="70" y="0" width="30" height="100" fill="#22a2ee"/></g></g></svg>
<div class="a" style="left:440px;top:766px;width:39px;height:2px;background:#76b9ed;"></div>
<div class="a" style="left:489px;top:766px;width:39px;height:2px;background:#76b9ed;"></div>
<div class="a" style="left:538px;top:766px;width:39px;height:2px;background:#76b9ed;"></div>
<div class="a" style="left:587px;top:766px;width:39px;height:2px;background:#76b9ed;"></div>
<div class="a" style="left:636px;top:766px;width:39px;height:2px;background:#76b9ed;"></div>
<div class="a" style="left:681px;top:766px;width:46px;height:2px;background:#76b9ed;"></div>
<div class="a" style="left:569px;top:766px;width:8px;height:2px;background:#5a6f80;"></div>
<svg class="i" style="left:931px;top:740px" width="23" height="16" viewBox="0 0 23 16"><defs><linearGradient id="cl" x1="0" y1="0" x2="0" y2="1"><stop offset="0" stop-color="#b4cff7"/><stop offset="1" stop-color="#7ba4ea"/></linearGradient></defs><path d="M5 16a5 5 0 0 1-.6-9.9A7 7 0 0 1 17.5 5 5.5 5.5 0 0 1 18 16z" fill="url(#cl)"/></svg>
<div class="t" style="left:963.5px;top:739.30px;font-size:15px;height:15px;line-height:15px;color:#ffffff;letter-spacing:-1.1px">28°C</div>
<div class="t" style="left:1001px;top:739.30px;font-size:15px;height:15px;line-height:15px;color:#ffffff;letter-spacing:-0.6px">Cloudy</div>
<svg class="i" style="left:1068px;top:743px" width="13" height="8" viewBox="0 0 13 8"><path d="M1 7 6.5 1.5 12 7" fill="none" stroke="#ffffff" stroke-width="1.3"/></svg>
<svg class="i" style="left:1090px;top:741px" width="20" height="15" viewBox="0 0 20 15"><path d="M4 12a3.5 3.5 0 0 1-.3-7A5 5 0 0 1 13 4a3.5 3.5 0 0 1 1 7z" fill="#c9c9c9"/><circle cx="14" cy="10.5" r="4.3" fill="#6a6a6a" stroke="#1e2d3f" stroke-width="1"/><path d="M12.8 8.5v4M15.2 8.5v4" stroke="#ffffff" stroke-width="1"/></svg>
<svg class="i" style="left:1114px;top:738px" width="18" height="19" viewBox="0 0 18 19"><circle cx="9.2" cy="9.4" r="8.2" fill="#9a1b1e"/><circle cx="9.3" cy="14" r="2.7" fill="none" stroke="#ffffff" stroke-width="1.6"/><path d="M10.5 1.8C8 2 7.3 3.5 8.3 5 9.3 6.3 11 6.8 10.6 8.5 10.3 9.8 8.6 10.6 7.3 10.2" fill="none" stroke="#ffffff" stroke-width="1.6"/><path d="M7.5 3.5h2.5M8.5 7.5h2.8" stroke="#ffffff" stroke-width="1"/></svg>
<svg class="i" style="left:1138px;top:738px" width="20" height="20" viewBox="0 0 20 20"><path d="M1.2 3.5 16.5 1.5V14.5L1.2 15.5Z" fill="none" stroke="#ffffff" stroke-width="1.3" stroke-linejoin="miter"/><path d="M5.5 9.5C5.5 7 7.5 5.5 10.5 6M9.5 4.5 11 6 9.3 7.3M12 8.5C12 11 10 12.5 7 12M8 13.5 6.5 12 8.2 10.8" fill="none" stroke="#ffffff" stroke-width="1.1"/><circle cx="13.5" cy="14.3" r="3.6" fill="#f7a21b" stroke="#1d2b45" stroke-width=".8"/></svg>
<svg class="i" style="left:1163px;top:743px" width="18" height="10" viewBox="0 0 18 10"><rect x="0.6" y="0.6" width="14.8" height="8.8" fill="none" stroke="#ffffff" stroke-width="1.1"/><rect x="2.5" y="2.5" width="5" height="5" fill="#ffffff"/><rect x="16" y="3" width="1.6" height="4" fill="#ffffff"/></svg>
<svg class="i" style="left:1186px;top:740px" width="18" height="16" viewBox="0 0 18 16"><path d="M1 5h3l4-4v14l-4-4H1z" fill="none" stroke="#ffffff" stroke-width="1.1" stroke-linejoin="round"/><path d="M10.5 5a4 4 0 0 1 0 6M13 3a7 7 0 0 1 0 10M15.5 1.5a9.5 9.5 0 0 1 0 13" fill="none" stroke="#ffffff" stroke-width="1.1"/></svg>
<div class="t" style="left:1213px;top:742.00px;font-size:12px;height:12px;line-height:12px;color:#ffffff;letter-spacing:-0.5px">ENG</div>
<div class="t" style="left:1264px;top:732.50px;font-size:12px;height:12px;line-height:12px;color:#ffffff;letter-spacing:-0.3px">22:12</div>
<div class="t" style="left:1249px;top:751.00px;font-size:12px;height:12px;line-height:12px;color:#ffffff;letter-spacing:-0.2px">23/08/2025</div>
<svg class="i" style="left:1326px;top:740px" width="15" height="16" viewBox="0 0 15 16"><path d="M0.7 0.7h13.6v10.3H9.5L7.5 13.5 5.5 11H.7z" fill="none" stroke="#ffffff" stroke-width="1.3" stroke-linejoin="miter"/></svg>
<div class="a" style="left:1361px;top:728px;width:1px;height:40px;background:#7b8290;"></div>
</body></html>
